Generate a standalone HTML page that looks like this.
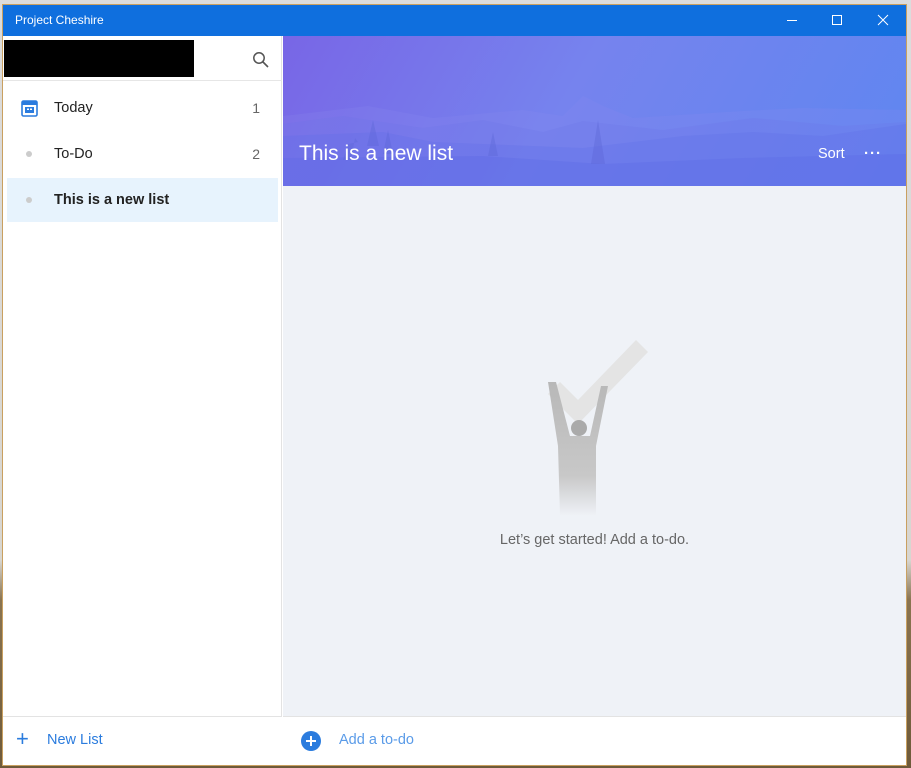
<!DOCTYPE html>
<html><head><meta charset="utf-8"><style>
*{margin:0;padding:0;box-sizing:border-box}
body{width:911px;height:768px;overflow:hidden;font-family:"Segoe UI","Liberation Sans",sans-serif;background:linear-gradient(#dcdcdc 0,#d8d6d0 560px,#8a7450 600px,#6e5a3a 768px);position:relative}
.win{position:absolute;left:2px;top:4px;width:905px;height:762px;border:1px solid #c9a060;background:#fff;overflow:hidden}
.title{position:absolute;left:0;top:0;width:903px;height:31px;background:#0f6fde;color:#fff;font-size:12px;line-height:31px;padding-left:12px}
.ctl{position:absolute;top:0;height:31px;width:46px}
.side{position:absolute;left:0;top:31px;width:279px;height:730px;background:#fff;border-right:1px solid #e3e3e3}
.black{position:absolute;left:1px;top:4px;width:190px;height:37px;background:#000}
.sline{position:absolute;left:0;top:44px;width:279px;height:1px;background:#e6e6e6}
.item{position:absolute;left:4px;width:271px;height:44px;font-size:14.5px;color:#222;line-height:44px}
.item .t{position:absolute;left:47px}
.item .n{position:absolute;right:18px;color:#666;font-size:14px}
.dot{position:absolute;left:19px;top:19px;width:6px;height:6px;border-radius:50%;background:#ccc}
.main{position:absolute;left:280px;top:31px;width:623px;height:730px;background:#eff2f7}
.hdr{position:absolute;left:0;top:0;width:623px;height:150px;background:linear-gradient(120deg,#7866e6 0%,#7683ee 45%,#5f86f0 100%);overflow:hidden}
.hdr h1{position:absolute;left:16px;top:106px;font-weight:normal;font-size:21px;color:#fff}
.sort{position:absolute;left:535px;top:110px;color:#fff;font-size:14.5px}
.more{position:absolute;left:581px;top:109px;color:#fff;font-size:15px;letter-spacing:1px;font-weight:bold}
.msg{position:absolute;left:0;width:623px;top:496px;text-align:center;font-size:14.5px;color:#666}
.bar{position:absolute;top:680px;height:50px;background:#fff;border-top:1px solid #e3e3e3}
</style></head><body>
<div class="win">
<div class="title">Project Cheshire
<svg class="ctl" style="left:766px" viewBox="0 0 46 31"><line x1="18" y1="15.5" x2="28" y2="15.5" stroke="#fff"/></svg>
<svg class="ctl" style="left:811px" viewBox="0 0 46 31"><rect x="18.5" y="10.5" width="9" height="9" fill="none" stroke="#fff"/></svg>
<svg class="ctl" style="left:857px" viewBox="0 0 46 31"><path d="M18 10l10 10M28 10l-10 10" stroke="#fff"/></svg>
</div>
<div class="side">
<div class="black"></div>
<svg style="position:absolute;left:249px;top:15px" width="18" height="18" viewBox="0 0 18 18"><circle cx="7" cy="7" r="5.2" fill="none" stroke="#555" stroke-width="1.5"/><line x1="11" y1="11" x2="16" y2="16" stroke="#555" stroke-width="1.6"/></svg>
<div class="sline"></div>
<div class="item" style="top:50px"><svg style="position:absolute;left:14px;top:14px" width="17" height="17" viewBox="0 0 17 17"><rect x="1" y="1" width="15" height="15" rx="1.5" fill="none" stroke="#2b7cde" stroke-width="1.6"/><rect x="1" y="1" width="15" height="4" fill="#2b7cde"/><rect x="4" y="7" width="9" height="6" fill="#2b7cde"/><rect x="6" y="8.5" width="2" height="1.5" fill="#fff"/><rect x="9" y="8.5" width="2" height="1.5" fill="#fff"/></svg><span class="t">Today</span><span class="n">1</span></div>
<div class="item" style="top:96px"><span class="dot"></span><span class="t">To-Do</span><span class="n">2</span></div>
<div class="item" style="top:142px;background:#e7f3fd"><span class="dot"></span><span class="t" style="font-weight:600">This is a new list</span></div>
<div class="bar" style="left:0;width:279px"><span style="position:absolute;left:13px;top:9px;color:#2b7cde;font-size:22px;font-weight:300">+</span><span style="position:absolute;left:44px;top:15px;color:#2b7cde;font-size:14.5px">New List</span></div>
</div>
<div class="main">
<div class="hdr">
<svg width="623" height="150" viewBox="0 0 623 150" style="position:absolute;left:0;top:0">
<path d="M0 80 L85 70 L150 82 L240 74 L280 80 L300 60 L320 70 L350 82 L460 75 L520 72 L623 74 V150 H0Z" fill="#8e8ef0" opacity=".2"/>
<path d="M0 88 L60 80 L140 92 L200 84 L260 96 L300 85 L380 94 L470 82 L560 90 L623 86 V150 H0Z" fill="#6a72e8" opacity=".25"/>
<path d="M0 100 L100 96 L150 106 L300 112 L400 100 L470 96 L540 100 L623 88 V150 H0Z" fill="#5c6ae6" opacity=".25"/>
<path d="M0 122 L200 120 L320 128 L460 122 L623 118 V150 H0Z" fill="#5a68e6" opacity=".3"/>
<path d="M75 106 L65 108 L60 124 L68 124 L72 102Z M90 84 L84 110 L96 110Z M105 94 L100 118 L110 118Z M315 84 L308 128 L322 128Z M210 96 L205 120 L215 120Z" fill="#5d66d8" opacity=".4"/>
</svg>
<h1>This is a new list</h1><span class="sort">Sort</span><span class="more">···</span>
</div>
<svg style="position:absolute;left:255px;top:300px" width="115" height="180" viewBox="0 0 115 180">
<defs><linearGradient id="g" x1="0" y1="0" x2="0" y2="1"><stop offset="0" stop-color="#b8b8b8"/><stop offset=".7" stop-color="#c8c8c8"/><stop offset="1" stop-color="#eff2f7"/></linearGradient></defs>
<path d="M10 50 L40 80 L110 8 L98 -4 L40 56 L22 38Z" fill="#e4e4e4" transform="translate(0,8)"/>
<path d="M10 46 L20 110 L22 180 L58 180 L58 110 L70 50 L63 50 L52 100 L32 100 L18 46Z" fill="url(#g)"/>
<circle cx="41" cy="92" r="8" fill="#aaa"/>
</svg>
<div class="msg">Let’s get started! Add a to-do.</div>
<div class="bar" style="left:0;width:623px"><svg style="position:absolute;left:18px;top:14px" width="20" height="20" viewBox="0 0 20 20"><circle cx="10" cy="10" r="10" fill="#2b7cde"/><path d="M10 5v10M5 10h10" stroke="#fff" stroke-width="2"/></svg><span style="position:absolute;left:56px;top:15px;color:#5a9be8;font-size:14.5px">Add a to-do</span></div>
</div>
</div>
</body></html>
